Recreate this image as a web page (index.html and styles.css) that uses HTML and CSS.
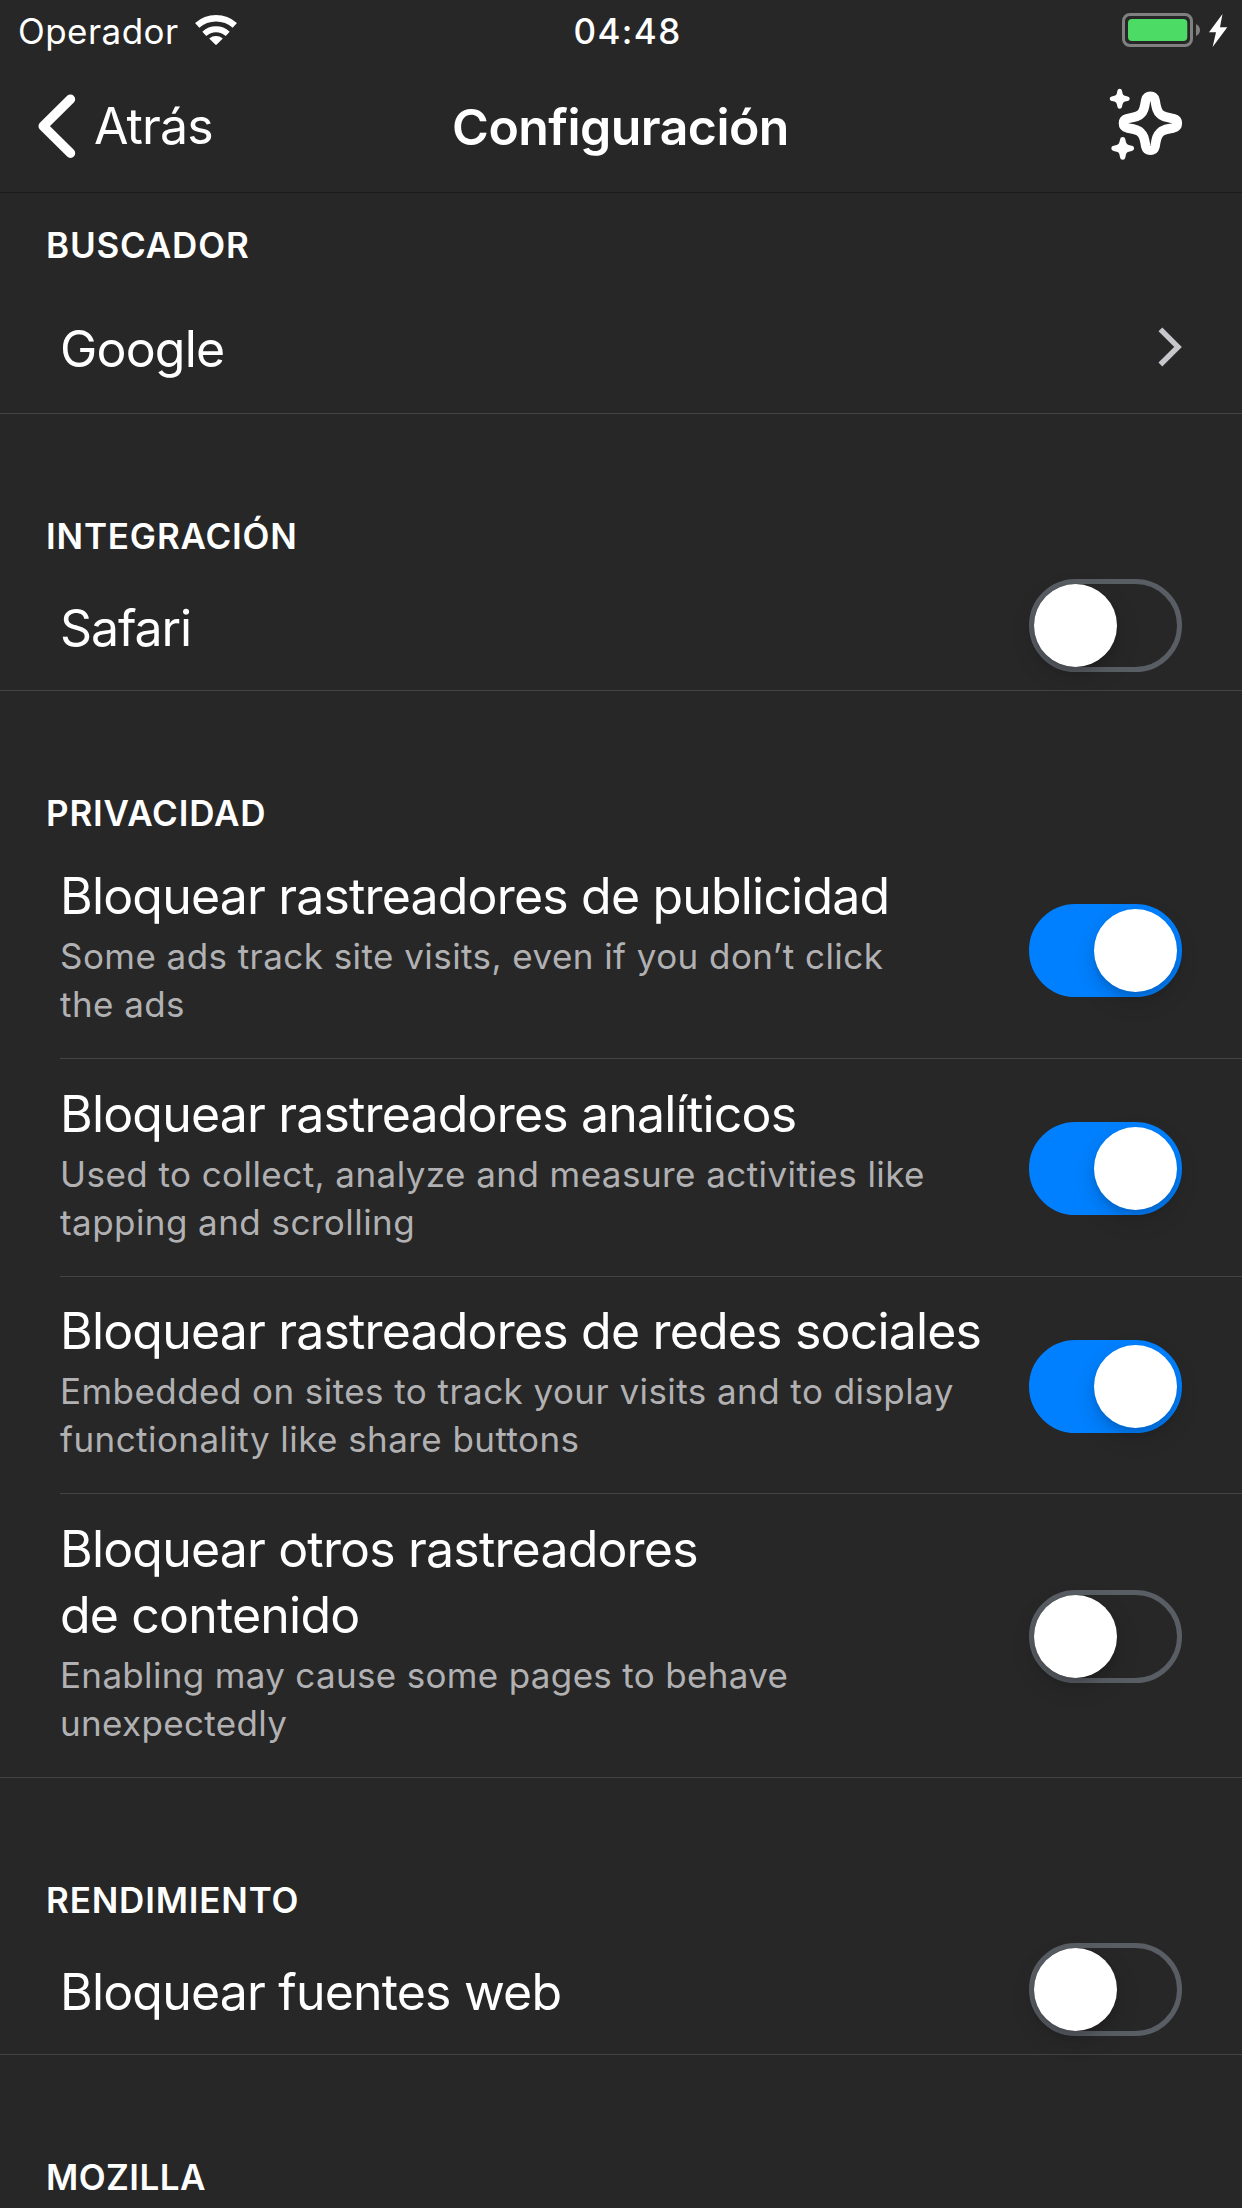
FILE: index.html
```html
<!DOCTYPE html>
<html lang="es">
<head>
<meta charset="utf-8">
<title>Configuración</title>
<link rel="stylesheet" href="styles.css">
</head>
<body>
<div class="status">
  <div class="carrier">
    <span>Operador</span>
    <svg class="wifi" width="44" height="32" viewBox="194 14 44 32">
      <path d="M197.2 25.4A28.3 28.3 0 0 1 234.8 25.4" fill="none" stroke="#fff" stroke-width="6.4"/>
      <path d="M204.3 33.8A17.3 17.3 0 0 1 227.7 33.8" fill="none" stroke="#fff" stroke-width="5.8"/>
      <path d="M209.2 38.4A11 11 0 0 1 222.8 38.4L217 44.3Q216 45.3 215 44.3Z" fill="#fff"/>
    </svg>
  </div>
  <span class="time">04:48</span>
  <div class="power">
    <svg width="106" height="36" viewBox="1122 12 106 36">
      <rect x="1123.5" y="14.5" width="68" height="31" rx="6.5" fill="none" stroke="#808080" stroke-width="3"/>
      <rect x="1128" y="19" width="59.3" height="22" rx="4" fill="#4cdb64"/>
      <path d="M1196 24Q1200 26 1200 30T1196 36Z" fill="#808080"/>
      <path d="M1222.5 14L1209 32.2H1216L1212.6 47L1227.3 27.3H1220Z" fill="#fff"/>
    </svg>
  </div>
</div>

<header class="nav">
  <a class="back">
    <svg width="38" height="64" viewBox="38 94 38 64">
      <path d="M70.5 99.2L43.2 126.2L70.5 153.2" fill="none" stroke="#fff" stroke-width="9.4" stroke-linecap="round" stroke-linejoin="round"/>
    </svg>
    <span>Atrás</span>
  </a>
  <h1 class="nav-title">Configuración</h1>
  <svg class="sparkle" width="76" height="76" viewBox="0 0 76 76">
    <path transform="translate(42.4 37.3)" d="M0-27C3-27 4.2-25 4.7-23C6-14.5 7-11.5 9.5-9.5C11.5-7 14.5-6 23-4.7C25-4.2 27-3 27 0C27 3 25 4.2 23 4.7C14.5 6 11.5 7 9.5 9.5C7 11.5 6 14.5 4.7 23C4.2 25 3 27 0 27C-3 27-4.2 25-4.7 23C-6 14.5-7 11.5-9.5 9.5C-11.5 7-14.5 6-23 4.7C-25 4.2-27 3-27 0C-27-3-25-4.2-23-4.7C-14.5-6-11.5-7-9.5-9.5C-7-11.5-6-14.5-4.7-23C-4.2-25-3-27 0-27Z" fill="none" stroke="#fff" stroke-width="9.4" stroke-linejoin="round"/>
    <path transform="translate(11.7 12.8)" d="M0-10Q2-10 2.3-8Q2.8-4.6 3.7-3.7Q4.6-2.8 8-2.3Q10-2 10 0Q10 2 8 2.3Q4.6 2.8 3.7 3.7Q2.8 4.6 2.3 8Q2 10 0 10Q-2 10-2.3 8Q-2.8 4.6-3.7 3.7Q-4.6 2.8-8 2.3Q-10 2-10 0Q-10-2-8-2.3Q-4.6-2.8-3.7-3.7Q-2.8-4.6-2.3-8Q-2-10 0-10Z" fill="#fff"/>
    <path transform="translate(14.7 62.3) scale(1.14)" d="M0-10Q2-10 2.3-8Q2.8-4.6 3.7-3.7Q4.6-2.8 8-2.3Q10-2 10 0Q10 2 8 2.3Q4.6 2.8 3.7 3.7Q2.8 4.6 2.3 8Q2 10 0 10Q-2 10-2.3 8Q-2.8 4.6-3.7 3.7Q-4.6 2.8-8 2.3Q-10 2-10 0Q-10-2-8-2.3Q-4.6-2.8-3.7-3.7Q-2.8-4.6-2.3-8Q-2-10 0-10Z" fill="#fff"/>
  </svg>
</header>

<main>
  <section class="group">
    <h2 class="heading heading-first">BUSCADOR</h2>
    <div class="row row-link">
      <span class="label">Google</span>
      <svg class="chevron" width="25" height="40" viewBox="0 0 25 40">
        <path d="M2.4 2.3L20 19.9L2.4 37.5" fill="none" stroke="#c7c7cc" stroke-width="5.4"/>
      </svg>
    </div>
  </section>

  <section class="group">
    <h2 class="heading">INTEGRACIÓN</h2>
    <div class="row row-single">
      <span class="label label-tight">Safari</span>
      <span class="switch"></span>
    </div>
  </section>

  <section class="group group-list">
    <h2 class="heading">PRIVACIDAD</h2>
    <div class="row row-detail">
      <div class="text">
        <p class="label">Bloquear rastreadores de publicidad</p>
        <p class="note">Some ads track site visits, even if you don’t click<br>the ads</p>
      </div>
      <span class="switch on"></span>
    </div>
    <div class="row row-detail">
      <div class="text">
        <p class="label">Bloquear rastreadores analíticos</p>
        <p class="note">Used to collect, analyze and measure activities like<br>tapping and scrolling</p>
      </div>
      <span class="switch on"></span>
    </div>
    <div class="row row-detail row-compact">
      <div class="text">
        <p class="label">Bloquear rastreadores de redes sociales</p>
        <p class="note">Embedded on sites to track your visits and to display<br>functionality like share buttons</p>
      </div>
      <span class="switch on"></span>
    </div>
    <div class="row row-detail">
      <div class="text">
        <p class="label">Bloquear otros rastreadores<br>de contenido</p>
        <p class="note note-tight">Enabling may cause some pages to behave<br>unexpectedly</p>
      </div>
      <span class="switch"></span>
    </div>
  </section>

  <section class="group">
    <h2 class="heading">RENDIMIENTO</h2>
    <div class="row row-single">
      <span class="label">Bloquear fuentes web</span>
      <span class="switch"></span>
    </div>
  </section>

  <section>
    <h2 class="heading heading-tight">MOZILLA</h2>
  </section>
</main>
</body>
</html>
```
FILE: styles.css
```css
* { box-sizing: border-box; margin: 0; padding: 0; }

body {
  width: 1242px;
  height: 2208px;
  overflow: hidden;
  background: #272727;
  color: #fff;
  font-family: Inter, "Liberation Sans", sans-serif;
}

svg { display: block; flex: none; }

/* Status bar */
.status {
  display: grid;
  grid-template-columns: 1fr auto 1fr;
  height: 60px;
  padding: 7px 14px 0 18px;
  font-size: 35px;
  line-height: 48px;
}
.carrier { display: flex; align-items: flex-start; gap: 15px; letter-spacing: 0.45px; }
.wifi { margin-top: 7px; }
.time { padding-left: 9px; font-weight: 500; letter-spacing: 1.4px; }
.power { display: flex; justify-content: flex-end; padding-top: 5px; }

/* Navigation bar */
.nav {
  display: grid;
  grid-template-columns: 1fr auto 1fr;
  height: 133px;
  padding: 0 58px 0 38px;
  border-bottom: 1px solid #1b1b1b;
  line-height: 66px;
}
.back {
  display: flex;
  align-items: flex-start;
  gap: 18px;
  padding-top: 33px;
  font-size: 50px;
  letter-spacing: -0.9px;
}
.back svg { margin-top: 1px; }
.nav-title {
  padding: 34px 0 0 19px;
  font-size: 50px;
  font-weight: 600;
  letter-spacing: -0.55px;
}
.sparkle { justify-self: end; margin-top: 26px; }

/* Setting groups */
.group { border-bottom: 1px solid #434345; }
.heading {
  height: 148px;
  padding: 98px 0 0 46px;
  font-size: 35px;
  font-weight: 600;
  line-height: 48px;
  letter-spacing: 0.82px;
}
.heading-first { height: 76px; padding-top: 28px; }
.heading-tight { letter-spacing: 0.45px; }
.group-list .heading { height: 150px; }

.row {
  display: flex;
  align-items: center;
  justify-content: space-between;
  margin-left: 60px;
  padding-right: 60px;
}
.row-link { height: 144px; padding: 16px 59px 0 0; }
.chevron { margin-bottom: 5px; }
.row-single { height: 128px; }
.row-single .label { padding-top: 4px; }
.row-single .switch { margin-bottom: 2px; }
.row-detail + .row-detail { border-top: 1px solid #434345; }
.row-detail .text { padding: 22px 0 30px; }
.row-compact .text { padding-top: 21px; }
.row-detail .switch { margin-top: 2px; }

.label {
  font-size: 50px;
  line-height: 66px;
  letter-spacing: -0.82px;
  white-space: nowrap;
}
.label-tight { letter-spacing: -1.1px; }
.note {
  margin-top: 3px;
  color: #b1b1b3;
  font-size: 35px;
  line-height: 48px;
  letter-spacing: 0.44px;
  white-space: nowrap;
}
.note-tight { letter-spacing: 0.33px; }

/* Switches */
.switch {
  display: flex;
  flex: none;
  width: 153px;
  height: 93px;
  border: 5px solid #595e65;
  border-radius: 47px;
}
.switch::before {
  content: "";
  width: 83px;
  height: 83px;
  border-radius: 50%;
  background: #fff;
  box-shadow: 0 9px 24px rgba(0, 0, 0, 0.15), 0 5px 6px rgba(0, 0, 0, 0.1);
}
.switch.on { justify-content: flex-end; border-color: #0080ff; background: #0080ff; }
```
